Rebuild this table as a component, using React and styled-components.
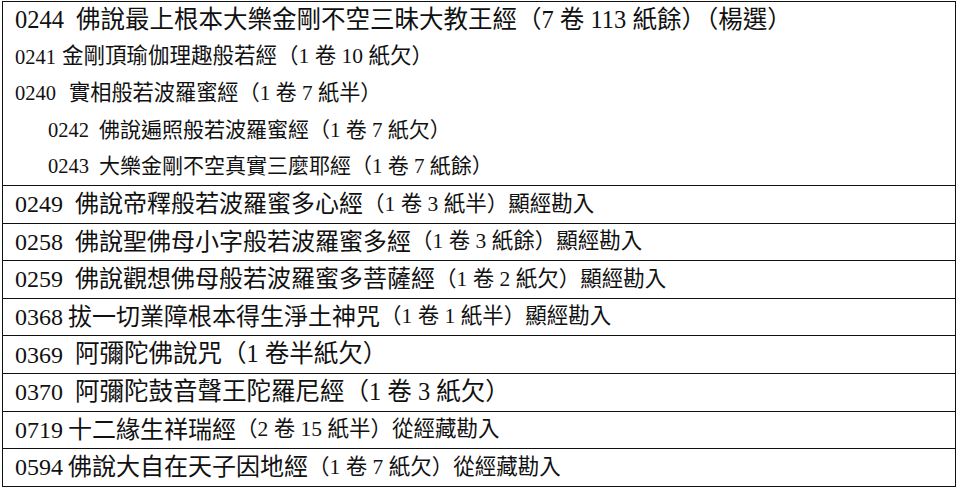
import React from 'react'
import styled, { createGlobalStyle } from 'styled-components'

const GlobalStyle = createGlobalStyle`
  html, body {
    margin: 0;
    padding: 0;
    background: #fff;
  }
  body {
    font-family: "Liberation Serif", "Noto Sans CJK TC", serif;
    color: #111;
  }
`

const Page = styled.div`
  padding: 1px 0 0 2px;
  width: 954px;
`

const Table = styled.div`
  border: 1px solid #111;
  display: flex;
  flex-direction: column;
`

const Row = styled.div`
  display: flex;
  flex-direction: column;
  border-top: ${p => (p.$first ? 'none' : '1px solid #111')};
`

const Line = styled.div`
  height: ${p => p.$h || 36.6}px;
  padding-left: ${p => 12 + (p.$indent || 0)}px;
  display: flex;
  align-items: center;
  white-space: nowrap;
`

const Text = styled.span`
  font-family: "Liberation Serif", "Noto Sans CJK TC", serif;
  font-size: ${p => p.$size}px;
  line-height: 1;
`

const Num = styled(Text)`
  margin-right: ${p => p.$gap}px;
`

const Note = styled(Text)`
  font-size: 21.5px;
`

const group = [
  { num: '0244', size: 24.5, numSize: 24.5, gap: 12, title: '佛說最上根本大樂金剛不空三昧大教王經（7 卷 113 紙餘）（楊選）' },
  { num: '0241', size: 21.5, numSize: 20.5, gap: 6, title: '金剛頂瑜伽理趣般若經（1 卷 10 紙欠）' },
  { num: '0240', size: 21.2, numSize: 20.5, gap: 13, title: '實相般若波羅蜜經（1 卷 7 紙半）' },
  { num: '0242', size: 21, numSize: 20.5, gap: 10, indent: 33, title: '佛說遍照般若波羅蜜經（1 卷 7 紙欠）' },
  { num: '0243', size: 21, numSize: 20.5, gap: 10, indent: 33, title: '大樂金剛不空真實三麼耶經（1 卷 7 紙餘）' },
]

const rows = [
  { num: '0249', gap: 12, title: '佛說帝釋般若波羅蜜多心經', note: '（1 卷 3 紙半）顯經勘入' },
  { num: '0258', gap: 12, title: '佛說聖佛母小字般若波羅蜜多經', note: '（1 卷 3 紙餘）顯經勘入' },
  { num: '0259', gap: 12, title: '佛說觀想佛母般若波羅蜜多菩薩經', note: '（1 卷 2 紙欠）顯經勘入' },
  { num: '0368', gap: 5, title: '拔一切業障根本得生淨土神咒', note: '（1 卷 1 紙半）顯經勘入' },
  { num: '0369', gap: 12, title: '阿彌陀佛說咒（1 卷半紙欠）' },
  { num: '0370', gap: 12, title: '阿彌陀鼓音聲王陀羅尼經（1 卷 3 紙欠）' },
  { num: '0719', gap: 5, title: '十二緣生祥瑞經', note: '（2 卷 15 紙半）從經藏勘入' },
  { num: '0594', gap: 5, title: '佛說大自在天子因地經', note: '（1 卷 7 紙欠）從經藏勘入' },
]

export default function App() {
  return (
    <Page>
      <GlobalStyle />
      <Table>
        <Row $first>
          {group.map(g => (
            <Line key={g.num} $indent={g.indent}>
              <Num $size={g.numSize} $gap={g.gap}>{g.num}</Num>
              <Text $size={g.size}>{g.title}</Text>
            </Line>
          ))}
        </Row>
        {rows.map(r => (
          <Row key={r.num}>
            <Line $h={36.6}>
              <Num $size={24} $gap={r.gap}>{r.num}</Num>
              <Text $size={r.note ? 24 : 24.5}>{r.title}</Text>
              {r.note && <Note>{r.note}</Note>}
            </Line>
          </Row>
        ))}
      </Table>
    </Page>
  )
}
